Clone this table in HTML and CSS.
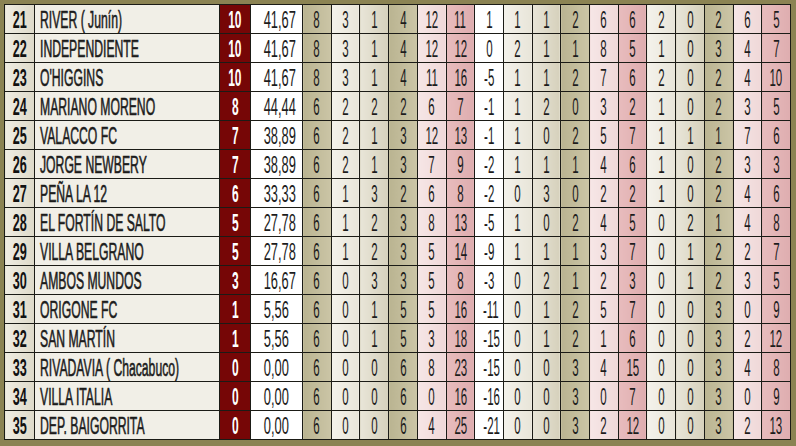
FILE: index.html
```html
<!DOCTYPE html>
<html lang="es">
<head>
<meta charset="utf-8">
<title>Tabla de posiciones</title>
<link rel="stylesheet" href="styles.css">
</head>
<body>
<table class="tabla">
<colgroup>
<col class="c-pos"><col class="c-name"><col class="c-pts"><col class="c-pct">
<col span="17">
</colgroup>
<tbody id="rows"></tbody>
</table>
<script src="app.js"></script>
</body>
</html>
```
FILE: styles.css
```css
html, body {
  margin: 0;
  padding: 0;
  background: #8b8353;
  width: 796px;
  height: 446px;
  overflow: hidden;
}
body {
  padding: 4px 0 0 4px;
  box-sizing: border-box;
}
.tabla {
  border-collapse: collapse;
  table-layout: fixed;
  width: 787px;
  border: 1px solid #1b1b16;
}
.c-pos { width: 30px; }
.c-name { width: 185px; }
.c-pts { width: 31px; }
.c-pct { width: 52px; }
.tabla td {
  border: 1px solid #1b1b16;
  height: 28px;
  padding: 0;
  text-align: center;
  vertical-align: middle;
  font-family: "Liberation Sans", Arial, sans-serif;
  font-size: 23px;
  line-height: 28px;
  color: #1c1c1c;
  overflow: hidden;
  white-space: nowrap;
}
.t {
  display: inline-block;
  transform: scaleX(0.5);
  transform-origin: center;
  position: relative;
  top: 1px;
}
.pos {
  background: linear-gradient(90deg, #efece2, #dedac9);
  font-weight: bold;
}
.pos .t { color: #111; transform: scaleX(0.55); }
.name {
  text-align: left !important;
  padding-left: 5px !important;
  background: #f1efe7;
}
.name .t {
  transform-origin: left center;
  transform: scaleX(0.53);
  -webkit-text-stroke: 0.6px #1c1c1c;
}
.pts {
  background: #760606;
}
.pts .t { color: #fff; font-weight: bold; transform: scaleX(0.52); }
.pct { background: #ffffff; }
.pct .t { transform: scaleX(0.56); }
.kh { background: linear-gradient(90deg, #bab491, #cbc5a6); }
.cr { background: linear-gradient(90deg, #f4f2eb, #e8e5d9); }
.gr { background: linear-gradient(90deg, #e8e5d8, #d6d1bc); }
.lp { background: linear-gradient(90deg, #f6e6e6, #efd8d8); }
.dp { background: linear-gradient(90deg, #e8bcbd, #deadaf); }
.wh { background: #ffffff; }
```
FILE: app.js
```js
const data = [
  [21, "RIVER ( Junín)", 10, "41,67", 8,3,1,4,12,11,1, 1,1,2,6,6, 2,0,2,6,5],
  [22, "INDEPENDIENTE", 10, "41,67", 8,3,1,4,12,12,0, 2,1,1,8,5, 1,0,3,4,7],
  [23, "O'HIGGINS", 10, "41,67", 8,3,1,4,11,16,-5, 1,1,2,7,6, 2,0,2,4,10],
  [24, "MARIANO MORENO", 8, "44,44", 6,2,2,2,6,7,-1, 1,2,0,3,2, 1,0,2,3,5],
  [25, "VALACCO FC", 7, "38,89", 6,2,1,3,12,13,-1, 1,0,2,5,7, 1,1,1,7,6],
  [26, "JORGE NEWBERY", 7, "38,89", 6,2,1,3,7,9,-2, 1,1,1,4,6, 1,0,2,3,3],
  [27, "PEÑA LA 12", 6, "33,33", 6,1,3,2,6,8,-2, 0,3,0,2,2, 1,0,2,4,6],
  [28, "EL FORTÍN DE SALTO", 5, "27,78", 6,1,2,3,8,13,-5, 1,0,2,4,5, 0,2,1,4,8],
  [29, "VILLA BELGRANO", 5, "27,78", 6,1,2,3,5,14,-9, 1,1,1,3,7, 0,1,2,2,7],
  [30, "AMBOS MUNDOS", 3, "16,67", 6,0,3,3,5,8,-3, 0,2,1,2,3, 0,1,2,3,5],
  [31, "ORIGONE FC", 1, "5,56", 6,0,1,5,5,16,-11, 0,1,2,5,7, 0,0,3,0,9],
  [32, "SAN MARTÍN", 1, "5,56", 6,0,1,5,3,18,-15, 0,1,2,1,6, 0,0,3,2,12],
  [33, "RIVADAVIA ( Chacabuco)", 0, "0,00", 6,0,0,6,8,23,-15, 0,0,3,4,15, 0,0,3,4,8],
  [34, "VILLA ITALIA", 0, "0,00", 6,0,0,6,0,16,-16, 0,0,3,0,7, 0,0,3,0,9],
  [35, "DEP. BAIGORRITA", 0, "0,00", 6,0,0,6,4,25,-21, 0,0,3,2,12, 0,0,3,2,13]
];
const cls = ["pos","name","pts","pct","kh","cr","gr","kh","lp","dp","wh","cr","gr","kh","lp","dp","cr","gr","kh","lp","dp"];
const tbody = document.getElementById("rows");
data.forEach(r => {
  const tr = document.createElement("tr");
  r.forEach((v, i) => {
    const td = document.createElement("td");
    td.className = cls[i];
    const s = document.createElement("span");
    s.className = "t";
    s.textContent = String(v);
    td.appendChild(s);
    tr.appendChild(td);
  });
  tbody.appendChild(tr);
});
```
